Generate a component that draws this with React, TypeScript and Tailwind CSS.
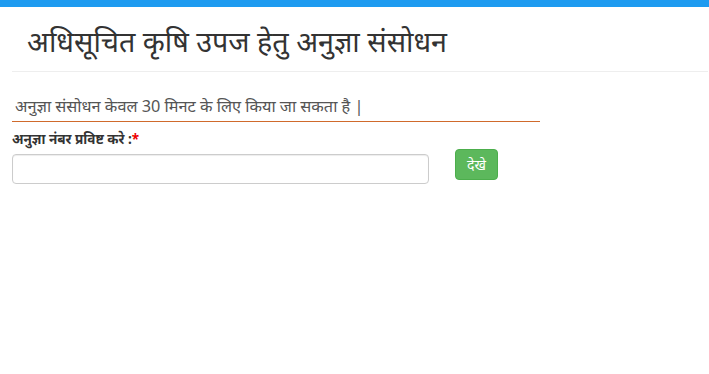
import React from "react";

const App = () => {
  return (
    <div className="min-h-screen bg-white text-[#333]" style={{ fontFamily: '"Noto Sans", "Liberation Sans", sans-serif' }}>
      <div className="h-[7px] bg-[#1e9bf0]" />
      <div className="pl-[12px] pr-[1px]">
        <div className="border-b border-[#eee] pb-[12px] pt-[16px]">
          <h1 className="pl-[15px] text-[28.7px] leading-[36px] font-normal text-[#333]">
            अधिसूचित कृषि उपज हेतु अनुज्ञा संसोधन
          </h1>
        </div>
        <div className="w-[528px] mt-[21px] border-b border-[#d06a2c] pb-[2px] pl-[3px] text-[16.3px] leading-[26px] text-[#555]">
          अनुज्ञा संसोधन केवल 30 मिनट के लिए किया जा सकता है |
        </div>
        <div className="mt-[7px] text-[13.5px] leading-[20px] font-bold text-[#333]">
          अनुज्ञा नंबर प्रविष्ट करे :<span className="text-[#e00]">*</span>
        </div>
        <div className="flex items-start">
          <input
            type="text"
            className="mt-[5px] h-[30px] w-[417px] rounded-[4px] border border-[#ccc] bg-white px-[10px] text-[14px] outline-none shadow-[inset_0_1px_1px_rgba(0,0,0,0.075)]"
          />
          <button className="ml-[26px] mt-0 h-[31px] w-[43px] rounded-[4px] bg-[#5cb85c] border border-[#4cae4c] text-white text-[14px] leading-[20px]">
            देखे
          </button>
        </div>
      </div>
    </div>
  );
};

export default App;
